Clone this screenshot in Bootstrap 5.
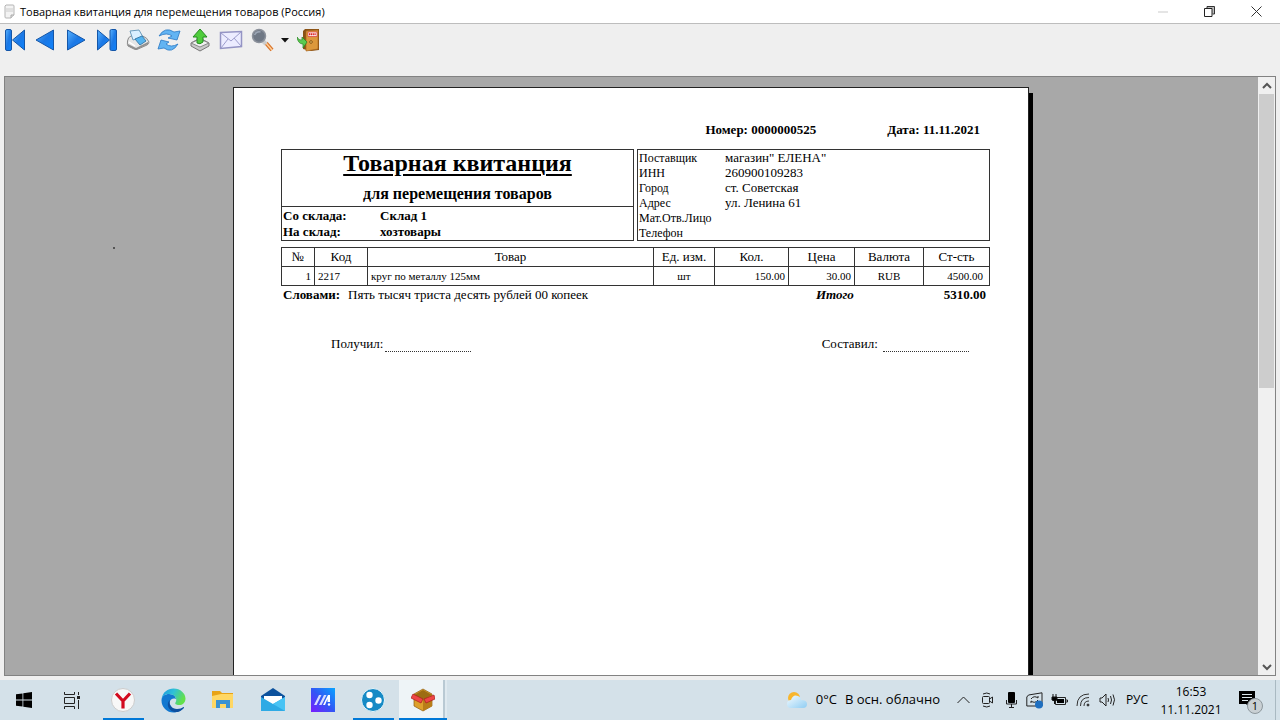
<!DOCTYPE html>
<html lang="ru">
<head>
<meta charset="utf-8">
<meta name="viewport" content="width=device-width, initial-scale=1">
<title>Товарная квитанция для перемещения товаров (Россия)</title>
<link href="https://cdn.jsdelivr.net/npm/bootstrap@5.3.0/dist/css/bootstrap.min.css" rel="stylesheet">
<style>
  body { font-family: "Open Sans", "Noto Sans", sans-serif; background: #efefef; color: #000; }
  button { border: 0; background: transparent; padding: 0; color: inherit; }
  svg { display: block; }
  .titlebar { height: 24px; border-bottom: 1px solid #bdbdbd; font-size: 11px; line-height: 23px; }
  .win-btn { width: 47px; height: 23px; }
  .toolbar { height: 52px; padding-top: 4px; }
  .tool { width: 31px; height: 24px; }
  .tool:first-child { width: 29px; }
  .drop { width: 16px; height: 24px; }
  .viewer { background: #a8a8a8; border: 1px solid #828282; margin: 0 4px 4px; min-height: 0; }
  .speck { left: 108px; top: 170px; width: 2px; height: 2px; background: #555; }
  .desk { padding-left: 2px; }
  .sheet-wrap { width: 100%; max-width: 799px; margin-top: 10px; }
  .sheet { border: 1px solid #222; border-bottom: 0; background: #fff; font-family: "Liberation Serif", serif; font-size: 13px; line-height: 15px; padding: 34px 38px 0 47px; }
  .shade { width: 4px; background: #000; margin-top: 6px; }
  .doc-no { margin-right: 71px; }
  .doc-head { padding-right: 10px; margin-bottom: 12px; }
  .boxed { border: 1px solid #333; }
  .parties { gap: 3px; height: 92px; }
  .doc-title { font-size: 24px; line-height: 26px; font-weight: 700; text-decoration: underline; text-decoration-thickness: 2px; text-underline-offset: 3px; }
  .doc-sub { font-size: 16px; line-height: 18px; margin-top: 9px; font-weight: 700; }
  .stores { border-top: 1px solid #333; padding: 1px 1px 0; line-height: 16px; font-weight: 700; }
  .store-key { width: 97px; }
  .supplier { padding: 0 0 0 1px; line-height: 15px; }
  .supplier dt { width: 86px; font-size: 12px; font-weight: 400; line-height: 14px; padding-top: 1px; white-space: nowrap; }
  .goods { width: 709px; margin-top: 6px; table-layout: fixed; border-collapse: collapse; font-size: 11px; }
  .goods th, .goods td { border: 1px solid #333; padding: 0 3px; height: 19px; line-height: 18px; white-space: nowrap; }
  .goods th { font-size: 13px; font-weight: 400; text-align: center; }
  .goods td:last-child { padding-right: 6px; }
  .totals { padding: 1px 4px 0 2px; }
  .total-label { margin-right: 90px; }
  .signs { margin: 34px 21px 0 50px; }
  .sign-line { width: 86px; border-bottom: 1px dotted #333; height: 16px; margin-left: 2px; }
  .scroll { width: 17px; background: #f0f0f0; }
  .scroll button { height: 17px; }
  .thumb { flex: 293 1 0; background: #cdcdcd; margin: 0 1px; }
  .track { flex: 270 1 0; }
  .taskbar { height: 40px; background: #d4e1e9; }
  .start { width: 48px; height: 40px; }
  .task-view { margin-right: 2px; }
  .app { width: 50px; height: 40px; }
  .running::after { content: ""; position: absolute; left: 5px; right: 4px; bottom: 0; height: 2px; background: #0078d7; }
  .active-app { background: linear-gradient(90deg, transparent 1px, #eef4f7 1px, #eef4f7 45px, #b9c9d3 45px, #b9c9d3 47px, #dfe9ef 47px, #dfe9ef 49px, transparent 49px); }
  .active-app::after { left: 1px; right: 1px; }
  .weather { font-size: 13px; margin-right: 11px; }
  .tray { width: 24px; height: 40px; }
  .lang { font-size: 12px; width: 36px; }
  .clock { font-size: 12px; line-height: 18px; width: 72px; padding-top: 2px; }
  .notice { width: 48px; height: 40px; }
  .desk-edge { width: 5px; border-left: 1px solid #a9b9c2; }
</style>
</head>
<body class="vh-100 d-flex flex-column overflow-hidden">

<svg width="0" height="0" class="position-absolute" aria-hidden="true">
  <defs>
    <linearGradient id="blue" x1="0" y1="0" x2="1" y2="1"><stop offset="0" stop-color="#5bb4ff"/><stop offset=".5" stop-color="#1c78e4"/><stop offset="1" stop-color="#0b83ff"/></linearGradient>
    <linearGradient id="edgeA" x1="0" y1="0" x2="1" y2=".4"><stop offset="0" stop-color="#1c94df"/><stop offset=".5" stop-color="#2fc1d8"/><stop offset="1" stop-color="#63e04a"/></linearGradient>
    <linearGradient id="maG" x1="0" y1="1" x2="1" y2="0"><stop offset="0" stop-color="#7a1cff"/><stop offset=".5" stop-color="#3157f5"/><stop offset="1" stop-color="#08a4ff"/></linearGradient>
    <linearGradient id="cloudG" x1="0" y1="0" x2="1" y2="1"><stop offset="0" stop-color="#f4fbff"/><stop offset="1" stop-color="#8fcdf3"/></linearGradient>
  </defs>
</svg>

<header class="titlebar bg-white d-flex align-items-center flex-shrink-0">
  <svg width="20" height="22" viewBox="0 0 20 22"><path d="M6 4h7q1 0 1 1v9l-3 3H6q-1 0-1-1V5z" fill="#f3f3f3" stroke="#b5b5b5"/><path d="M6 8h7M6 10h7" stroke="#ccc"/><path d="M11 17v-3h3" fill="#ddd" stroke="#aaa"/></svg>
  <div class="flex-grow-1">Товарная квитанция для перемещения товаров (Россия)</div>
  <button class="win-btn d-flex justify-content-center align-items-center" aria-label="Свернуть" disabled><svg width="10" height="10"><path d="M0 5h10" stroke="#ddd" stroke-width="1.5"/></svg></button>
  <button class="win-btn d-flex justify-content-center align-items-center" aria-label="Восстановить"><svg width="11" height="11"><path d="M3 2.500V.5h7.500v7.500H8.500" fill="#bbb" stroke="#333"/><path d="M.5 2.500H8v8H.5z" fill="#fff" stroke="#222"/></svg></button>
  <button class="win-btn d-flex justify-content-center align-items-center" aria-label="Закрыть"><svg width="11" height="11"><path d="M.5.5l10 10M10.500.5l-10 10" stroke="#333"/></svg></button>
</header>

<nav class="toolbar d-flex align-items-start flex-shrink-0" aria-label="Панель инструментов">
  <button class="tool d-flex justify-content-center align-items-center" aria-label="Первая страница"><svg width="22" height="24"><rect x="1.500" y="1.500" width="6" height="21" rx="1.500" fill="url(#blue)" stroke="#1456a8"/><path d="M20.500 2v20L8.500 12z" fill="url(#blue)" stroke="#1456a8" stroke-linejoin="round"/></svg></button>
  <button class="tool d-flex justify-content-center align-items-center" aria-label="Назад"><svg width="22" height="24"><path d="M19.500 2v20L2 12z" fill="url(#blue)" stroke="#1456a8" stroke-linejoin="round"/></svg></button>
  <button class="tool d-flex justify-content-center align-items-center" aria-label="Вперёд"><svg width="22" height="24"><path d="M2.500 2v20L20 12z" fill="url(#blue)" stroke="#1456a8" stroke-linejoin="round"/></svg></button>
  <button class="tool d-flex justify-content-center align-items-center" aria-label="Последняя страница"><svg width="22" height="24"><path d="M1.500 2v20L13.500 12z" fill="url(#blue)" stroke="#1456a8" stroke-linejoin="round"/><rect x="14" y="1.500" width="6.500" height="21" rx="1.500" fill="url(#blue)" stroke="#1456a8"/></svg></button>
  <button class="tool d-flex justify-content-center align-items-center" aria-label="Печать"><svg width="24" height="24"><path d="M1.500 13Q2 9 5 8l10-1q7 3 8 7 0 2-2 3l-9 4q-2 1-4 0l-6-3q-1-1-.5-5z" fill="#e6e6e6" stroke="#8a8a8a"/><path d="M2 16l8 4 12-6v2l-12 6-8-4z" fill="#8f8f8f"/><path d="M4 3l9-1 4 7-10 3z" fill="#d9efff" stroke="#6d9dbd"/><path d="M9 11l7-3 4 5-6 4z" fill="#55b5f0" stroke="#3b7fae"/><path d="M3 14l6 4" stroke="#fff" stroke-width="1.500"/></svg></button>
  <button class="tool d-flex justify-content-center align-items-center" aria-label="Обновить"><svg width="24" height="24"><path d="M2 8Q8-2 17 4l6-1-3 9-9-2 4-2Q10 4 2 8z" fill="#62b4f3" stroke="#2b78c4" stroke-width=".8" stroke-linejoin="round"/><path d="M21 16q-6 10-14 4l-6 1 3-9 8 2-3 2q5 4 12 0z" fill="#62b4f3" stroke="#2b78c4" stroke-width=".8" stroke-linejoin="round"/></svg></button>
  <button class="tool d-flex justify-content-center align-items-center" aria-label="Экспорт"><svg width="22" height="24"><path d="M2 15l9-5 9 5v3l-9 5-9-5z" fill="#c9c9c9" stroke="#777"/><path d="M2 15l9 4 9-4-9-4z" fill="#f0f0f0" stroke="#888"/><path d="M11 1l7 8h-4v5q-3 3-6 1V9H4z" fill="#4fcd3c" stroke="#268b22" stroke-linejoin="round"/></svg></button>
  <button class="tool d-flex justify-content-center align-items-center" aria-label="Отправить по почте"><svg width="24" height="24"><path d="M1.500 4.500l21-1v15l-21 2z" fill="#ececff" stroke="#9494c4" stroke-width="1.500"/><path d="M2 5l10 8L22 4M2 20l7-9M22 18l-7-8" fill="none" stroke="#9c9ccc"/></svg></button>
  <button class="tool d-flex justify-content-center align-items-center" aria-label="Масштаб"><svg width="24" height="24"><path d="M16 15l6 7" stroke="#d9742b" stroke-width="4"/><path d="M16 15l6 7" stroke="#ffd09a" stroke-width="1.500"/><path d="M12 12l4 4" stroke="#ccc" stroke-width="4"/><circle cx="9" cy="8" r="6.500" fill="#6f7885" stroke="#8c929c" stroke-width="1.500"/><path d="M4.500 7q2-4 6-3" stroke="#9ca6b5" fill="none" stroke-width="1.500"/></svg></button>
  <button class="drop d-flex justify-content-center align-items-center" aria-label="Выбрать масштаб"><svg width="8" height="5"><path d="M0 0h8L4 4.500z" fill="#111"/></svg></button>
  <button class="tool d-flex justify-content-center align-items-center" aria-label="Выход"><svg width="24" height="24"><path d="M6 3l2-2h14v21l-8 1-8-2z" fill="#8a5216"/><path d="M9 3l12-1v19l-12 2z" fill="#dc983c" stroke="#a9661e" stroke-width=".7"/><path d="M11 4h9v4.500h-9z" fill="#fff" stroke="#db4545" stroke-width=".8"/><path d="M12 6.300h7" stroke="#d22" stroke-width="2" stroke-dasharray="1.300 .5"/><circle cx="14" cy="14" r="1.300" fill="#ffe27a" stroke="#854d12"/><path d="M0 9q2 4 5 3V9l5 5-4 6v-4Q1 16 0 9z" fill="#5bcb50" stroke="#25851f" stroke-width=".7"/></svg></button>
</nav>

<main class="viewer flex-grow-1 d-flex position-relative">
  <span class="speck position-absolute"></span>
  <div class="desk flex-grow-1 d-flex justify-content-center overflow-hidden">
    <div class="sheet-wrap d-flex">
      <article class="sheet flex-grow-1">
        <div class="doc-head d-flex justify-content-end fw-bold">
          <span class="doc-no">Номер: 0000000525</span><span>Дата: 11.11.2021</span>
        </div>
        <div class="parties d-flex">
          <section class="boxed w-50 d-flex flex-column text-center">
            <h1 class="doc-title m-0">Товарная квитанция</h1>
            <div class="doc-sub">для перемещения товаров</div>
            <div class="stores mt-auto text-start pb-0">
              <div class="d-flex"><span class="store-key">Со склада:</span><span>Склад 1</span></div>
              <div class="d-flex"><span class="store-key">На склад:</span><span>хозтовары</span></div>
            </div>
          </section>
          <dl class="supplier boxed w-50 m-0">
            <div class="d-flex"><dt>Поставщик</dt><dd class="m-0">магазин" ЕЛЕНА"</dd></div>
            <div class="d-flex"><dt>ИНН</dt><dd class="m-0">260900109283</dd></div>
            <div class="d-flex"><dt>Город</dt><dd class="m-0">ст. Советская</dd></div>
            <div class="d-flex"><dt>Адрес</dt><dd class="m-0">ул. Ленина 61</dd></div>
            <div class="d-flex"><dt>Мат.Отв.Лицо</dt><dd class="m-0"></dd></div>
            <div class="d-flex"><dt>Телефон</dt><dd class="m-0"></dd></div>
          </dl>
        </div>
        <table class="goods">
          <colgroup><col style="width:33px"><col style="width:53px"><col><col style="width:61px"><col style="width:74px"><col style="width:66px"><col style="width:69px"><col style="width:66px"></colgroup>
          <thead><tr><th>№</th><th>Код</th><th>Товар</th><th>Ед. изм.</th><th>Кол.</th><th>Цена</th><th>Валюта</th><th>Ст-сть</th></tr></thead>
          <tbody><tr><td class="text-end">1</td><td>2217</td><td>круг по металлу 125мм</td><td class="text-center">шт</td><td class="text-end">150.00</td><td class="text-end">30.00</td><td class="text-center">RUB</td><td class="text-end">4500.00</td></tr></tbody>
        </table>
        <div class="totals d-flex">
          <b class="me-2">Словами:</b><span class="flex-grow-1">Пять тысяч триста десять рублей 00 копеек</span>
          <b class="total-label fst-italic">Итого</b><b>5310.00</b>
        </div>
        <div class="signs d-flex justify-content-between">
          <div class="d-flex">Получил:<span class="sign-line"></span></div>
          <div class="d-flex">Составил:&nbsp;<span class="sign-line"></span></div>
        </div>
      </article>
      <div class="shade flex-shrink-0"></div>
    </div>
  </div>
  <div class="scroll d-flex flex-column flex-shrink-0">
    <button class="d-flex justify-content-center align-items-center" aria-label="Прокрутить вверх"><svg width="10" height="8"><path d="M1 6l4-4 4 4" fill="none" stroke="#555" stroke-width="2"/></svg></button>
    <div class="thumb"></div><div class="track"></div>
    <button class="d-flex justify-content-center align-items-center" aria-label="Прокрутить вниз"><svg width="10" height="8"><path d="M1 2l4 4 4-4" fill="none" stroke="#555" stroke-width="2"/></svg></button>
  </div>
</main>

<footer class="taskbar d-flex align-items-center flex-shrink-0">
  <button class="start d-flex justify-content-center align-items-center" aria-label="Пуск"><svg width="16" height="16"><path d="M0 2.300l6.500-.9v6.200H0zM7.300 1.300L16 0v7.600H7.300zM0 8.400h6.500v6.200L0 13.700zM7.300 8.400H16V16l-8.700-1.300z"/></svg></button>
  <button class="start task-view d-flex justify-content-center align-items-center" aria-label="Представление задач"><svg width="18" height="17" fill="none" stroke="#222"><path d="M1.500 0v2.500h10V0M1.500 5.500h10v6h-10zM1.500 17v-2.500h10V17M15.500 0v3M15.500 8v9"/><path d="M14 5.500h3" stroke-width="3"/></svg></button>
  <button class="app running position-relative d-flex justify-content-center align-items-center" aria-label="Яндекс Браузер"><svg width="24" height="24"><circle cx="12" cy="12" r="11.500" fill="#f7f7f7" stroke="#ccc"/><path d="M5 5.500l7 7.500 7-7.500M12 12v8.500" fill="none" stroke="#d2091e" stroke-width="3.200"/></svg></button>
  <button class="app d-flex justify-content-center align-items-center" aria-label="Edge"><svg width="25" height="25" viewBox="0 0 25 25"><path d="M.5 12.500C.5 8 4 6 8 6c5 0 7 3 7 5-5-2-8 3-5 7 3 5 8 5 13 1-2 3-6 5.500-10.500 5.500A12 12 0 0 1 .5 12.500z" fill="#1278d0"/><path d="M.6 11C1.500 4 7 .5 12.500.5c7 0 12 5 12 10 0 5-4 7-7 6.500-2 0-4-1-3-2.500 2-3 0-8-6-8.500C4 6 1.500 8 .6 11z" fill="url(#edgeA)"/><path d="M9 12c-2 5 2 9 7 9 3 0 5-1 6.500-2 1 0 .5 1 0 1.500-4 4.500-10 4.500-13 1.500C6 19 6 14 9 12z" fill="#0d4f9f"/></svg></button>
  <button class="app d-flex justify-content-center align-items-center" aria-label="Проводник"><svg width="22" height="20"><path d="M0 1h8l2 2h11v15H0z" fill="#e8a317"/><path d="M0 6l9-2h12v14H0z" fill="#ffd764"/><path d="M4 18v-8h14v8h-4v-4H8v4z" fill="#3b92d2"/></svg></button>
  <button class="app d-flex justify-content-center align-items-center" aria-label="Почта"><svg width="26" height="24"><path d="M1 8l12-8 12 8v4H1z" fill="#0d529d"/><path d="M4 8h18v8H4z" fill="#fff"/><path d="M1 9l12 7 12-7v14H1z" fill="#2eaae5"/><path d="M13 16l12-7v14z" fill="#49c3f4"/></svg></button>
  <button class="app d-flex justify-content-center align-items-center" aria-label="MyASUS"><svg width="24" height="24"><path d="M0 0h24v24H0z" fill="url(#maG)"/><path d="M3 17L8 7h2.500l-5 10zM8 17l5-10h2.500l-5 10z" fill="#d9dcff"/><path d="M12 17l5-10h2v7h-2.500v-3l-2.500 6z" fill="#fff"/><circle cx="18" cy="16.500" r="1.200" fill="#fff"/></svg></button>
  <button class="app running position-relative d-flex justify-content-center align-items-center" aria-label="Программа учёта"><svg width="24" height="24"><circle cx="12" cy="12" r="11.500" fill="#168ac5" stroke="#e9f5fa"/><circle cx="8.500" cy="7" r="3.200" fill="#fff"/><circle cx="17.500" cy="12.500" r="3.200" fill="#fff"/><circle cx="8.500" cy="17" r="3.200" fill="#fff"/></svg></button>
  <button class="app running active-app position-relative d-flex justify-content-center align-items-center" aria-label="Склад"><svg width="24" height="24"><path d="M3 6l9-5 9 5v12l-9 5-9-5z" fill="#dda02b" stroke="#8d5a10" stroke-width=".7"/><path d="M3 7l9-5 9 5-9 5z" fill="#9d6c12"/><path d="M12 12v11l9-5V7z" fill="#b97d18"/><path d="M2 6l10 5-2 4L0 10zM13 11l10-4 1 4-9 4z" fill="#ef4646" stroke="#a81c1c" stroke-width=".7"/></svg></button>

  <div class="weather ms-auto d-flex align-items-center">
    <svg width="22" height="18" class="me-2"><circle cx="8" cy="7" r="6" fill="#f8b62d"/><path d="M5 17q-4 0-4-4t4-4q2-6 7-4 3 1 3 4 6 0 6 4t-4 4z" fill="url(#cloudG)"/></svg>
    <span class="me-2">0°C</span><span>В осн. облачно</span>
  </div>
  <button class="tray d-flex justify-content-center align-items-center" aria-label="Скрытые значки"><svg width="13" height="8"><path d="M.5 7l6-6 6 6" fill="none" stroke="#222"/></svg></button>
  <button class="tray d-flex justify-content-center align-items-center" aria-label="Камера"><svg width="13" height="16" fill="none" stroke="#222"><rect x="1.500" y="4.500" width="7" height="7" rx="1"/><path d="M8.500 7l3-2v6l-3-2M2 2q4-2 7 0M2 14q4 2 7 0"/></svg></button>
  <button class="tray d-flex justify-content-center align-items-center" aria-label="Микрофон"><svg width="12" height="16"><rect x="3" y="0" width="7" height="11" rx="1"/><path d="M1.500 8v4h10V8M6.500 12v3.500M4 15.500h5" fill="none" stroke="#222"/></svg></button>
  <button class="tray d-flex justify-content-center align-items-center" aria-label="Синхронизация"><svg width="18" height="17"><path d="M2.500 3L16 .8V14H.8V5z" fill="none" stroke="#222"/><path d="M5 7q3-4 7-1V4M12 8q-3 4-7 1v2" fill="none" stroke="#222"/><circle cx="13" cy="12.500" r="4" fill="#1f6fc0"/></svg></button>
  <button class="tray d-flex justify-content-center align-items-center" aria-label="Батарея"><svg width="17" height="13"><path d="M4.500 3.500h10v7h-10zM14.500 6h2v2h-2" fill="none" stroke="#222"/><path d="M6 5h7v4H6z"/><path d="M1 3h5v3q-2 2-5 0zM2 0v3M5 0v3M3.500 7v3" stroke="#111"/></svg></button>
  <button class="tray d-flex justify-content-center align-items-center" aria-label="Сеть"><svg width="15" height="14" fill="none" stroke="#333"><path d="M1 13Q1 1 13 1M4.500 13Q4.500 4.500 13 4.500M8 13q0-5 5-5"/><circle cx="12" cy="12" r="1" fill="#222"/></svg></button>
  <button class="tray d-flex justify-content-center align-items-center" aria-label="Громкость"><svg width="17" height="14" fill="none" stroke="#222"><path d="M1 5h2l4-4v12L3 9H1zM9 5q1 2 0 4M11.500 3q2 4 0 8M14 1.500q3 5 0 11"/></svg></button>
  <button class="lang text-center">РУС</button>
  <div class="clock text-center">16:53<br>11.11.2021</div>
  <button class="notice position-relative d-flex justify-content-center align-items-center" aria-label="Уведомления: 1"><svg width="28" height="30"><path d="M2 6h16v13h-5v4l-4-4H2z"/><path d="M5 9.500h10M5 12.500h10M5 15.500h6" stroke="#dce7ec"/><circle cx="18" cy="21" r="7.500" fill="#c9d0d4" stroke="#8d979d"/><text x="18" y="25" font-size="11" text-anchor="middle">1</text></svg></button>
  <div class="desk-edge align-self-stretch"></div>
</footer>
<script src="https://cdn.jsdelivr.net/npm/bootstrap@5.3.0/dist/js/bootstrap.bundle.min.js"></script>
</body>
</html>
